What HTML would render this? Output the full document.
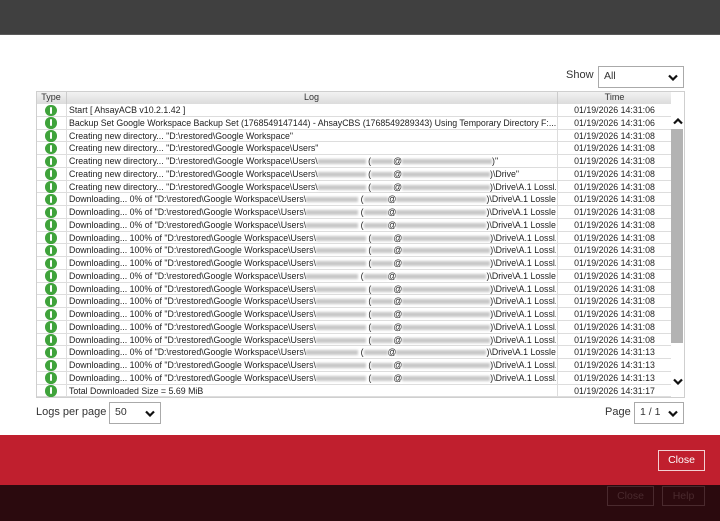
<!DOCTYPE html>
<html><head><meta charset="utf-8">
<style>
*{margin:0;padding:0;box-sizing:border-box}
body{width:720px;height:521px;overflow:hidden;background:#fff;font-family:"Liberation Sans",sans-serif;position:relative;color:#333}
.top{position:absolute;left:0;top:0;width:720px;height:35px;background:#404040;border-bottom:1px solid #5a5a5a}
.red{position:absolute;left:0;top:435px;width:720px;height:50px;background:#c01f2e}
.dark{position:absolute;left:0;top:485px;width:720px;height:36px;background:#2b0a0e}
.lbl{position:absolute;font-size:11px;color:#333}
.sel{position:absolute;border:1px solid #aaa;background:#fff;font-size:10.5px;padding:3px 5px;color:#333}
.sel svg{position:absolute;right:5px;top:50%;margin-top:-3px}
.tbl{position:absolute;left:36px;top:91px;width:649px;height:307px;border:1px solid #cfcfcf;overflow:hidden}
.hdr{position:absolute;left:0;top:0;width:634px;height:12px;background:linear-gradient(#f2f2f2,#dcdcdc);font-size:9px;color:#333}
.hdr div{position:absolute;top:0;text-align:center;height:12px}
.row{position:absolute;left:0;width:634px;height:12.75px;border-bottom:1px solid #ddd;font-size:8.8px;white-space:nowrap;line-height:12px;color:#222}
.row .ic{position:absolute;left:8px;top:0.5px;width:11.5px;height:11.5px;border-radius:50%;background:#3fa33b}
.row .ic:after{content:"";position:absolute;left:4.6px;top:2.2px;width:2.2px;height:7px;background:#fff;border-radius:1px}
.row .lg{position:absolute;left:29px;width:490px;overflow:hidden;border-left:1px solid #ddd;padding-left:2px;height:12.75px}
.row .tm{position:absolute;left:520px;width:114px;text-align:center;border-left:1px solid #ddd;height:12.75px}
.b{display:inline-block;height:5px;background:#c8c8c8;filter:blur(1px);vertical-align:middle}
.sb{position:absolute;left:634px;top:37px;width:12px;height:214px;background:#b3b3b3}
.btn{position:absolute;font-size:10.5px;text-align:center;line-height:18px}
</style></head><body>
<div class="top"></div>
<div class="lbl" style="left:566px;top:69px">Show</div>
<div class="sel" style="left:598px;top:66px;width:86px;height:22px">All<svg width="10" height="7" viewBox="0 0 10 7"><path d="M1 1.5L5 5.5L9 1.5" stroke="#111" stroke-width="2.2" fill="none"/></svg></div>

<div class="tbl">
<div class="hdr"><div style="left:0;width:28px">Type</div><div style="left:29px;width:490px;border-left:1px solid #ccc">Log</div><div style="left:520px;width:114px;border-left:1px solid #ccc">Time</div></div>
<div class="sb"></div>
<svg style="position:absolute;left:636px;top:26px" width="10" height="7" viewBox="0 0 10 7"><path d="M1 5.5L5 1.5L9 5.5" stroke="#111" stroke-width="2.2" fill="none"/></svg>
<svg style="position:absolute;left:636px;top:286px" width="10" height="7" viewBox="0 0 10 7"><path d="M1 1.5L5 5.5L9 1.5" stroke="#111" stroke-width="2.2" fill="none"/></svg>

<div class="row" style="top:12px"><i class="ic"></i><div class="lg">Start [ AhsayACB v10.2.1.42 ]</div><div class="tm">01/19/2026 14:31:06</div></div>
<div class="row" style="top:24.75px"><i class="ic"></i><div class="lg">Backup Set Google Workspace Backup Set (1768549147144) - AhsayCBS (1768549289343) Using Temporary Directory F:...</div><div class="tm">01/19/2026 14:31:06</div></div>
<div class="row" style="top:37.5px"><i class="ic"></i><div class="lg">Creating new directory... "D:\restored\Google Workspace"</div><div class="tm">01/19/2026 14:31:08</div></div>
<div class="row" style="top:50.25px"><i class="ic"></i><div class="lg">Creating new directory... "D:\restored\Google Workspace\Users"</div><div class="tm">01/19/2026 14:31:08</div></div>
<div class="row" style="top:63px"><i class="ic"></i><div class="lg">Creating new directory... "D:\restored\Google Workspace\Users\<span class="b" style="width:48px"></span> (<span class="b" style="width:22px"></span>@<span class="b" style="width:90px"></span>)"</div><div class="tm">01/19/2026 14:31:08</div></div>
<div class="row" style="top:75.75px"><i class="ic"></i><div class="lg">Creating new directory... "D:\restored\Google Workspace\Users\<span class="b" style="width:48px"></span> (<span class="b" style="width:22px"></span>@<span class="b" style="width:88px"></span>)\Drive"</div><div class="tm">01/19/2026 14:31:08</div></div>
<div class="row" style="top:88.5px"><i class="ic"></i><div class="lg">Creating new directory... "D:\restored\Google Workspace\Users\<span class="b" style="width:48px"></span> (<span class="b" style="width:22px"></span>@<span class="b" style="width:88px"></span>)\Drive\A.1 Lossl...</div><div class="tm">01/19/2026 14:31:08</div></div>
<div class="row" style="top:101.25px"><i class="ic"></i><div class="lg">Downloading... 0% of "D:\restored\Google Workspace\Users\<span class="b" style="width:52px"></span> (<span class="b" style="width:24px"></span>@<span class="b" style="width:90px"></span>)\Drive\A.1 Lossles...</div><div class="tm">01/19/2026 14:31:08</div></div>
<div class="row" style="top:114px"><i class="ic"></i><div class="lg">Downloading... 0% of "D:\restored\Google Workspace\Users\<span class="b" style="width:52px"></span> (<span class="b" style="width:24px"></span>@<span class="b" style="width:90px"></span>)\Drive\A.1 Lossles...</div><div class="tm">01/19/2026 14:31:08</div></div>
<div class="row" style="top:126.75px"><i class="ic"></i><div class="lg">Downloading... 0% of "D:\restored\Google Workspace\Users\<span class="b" style="width:52px"></span> (<span class="b" style="width:24px"></span>@<span class="b" style="width:90px"></span>)\Drive\A.1 Lossles...</div><div class="tm">01/19/2026 14:31:08</div></div>
<div class="row" style="top:139.5px"><i class="ic"></i><div class="lg">Downloading... 100% of "D:\restored\Google Workspace\Users\<span class="b" style="width:50px"></span> (<span class="b" style="width:22px"></span>@<span class="b" style="width:88px"></span>)\Drive\A.1 Lossl...</div><div class="tm">01/19/2026 14:31:08</div></div>
<div class="row" style="top:152.25px"><i class="ic"></i><div class="lg">Downloading... 100% of "D:\restored\Google Workspace\Users\<span class="b" style="width:50px"></span> (<span class="b" style="width:22px"></span>@<span class="b" style="width:88px"></span>)\Drive\A.1 Lossl...</div><div class="tm">01/19/2026 14:31:08</div></div>
<div class="row" style="top:165px"><i class="ic"></i><div class="lg">Downloading... 100% of "D:\restored\Google Workspace\Users\<span class="b" style="width:50px"></span> (<span class="b" style="width:22px"></span>@<span class="b" style="width:88px"></span>)\Drive\A.1 Lossl...</div><div class="tm">01/19/2026 14:31:08</div></div>
<div class="row" style="top:177.75px"><i class="ic"></i><div class="lg">Downloading... 0% of "D:\restored\Google Workspace\Users\<span class="b" style="width:52px"></span> (<span class="b" style="width:24px"></span>@<span class="b" style="width:90px"></span>)\Drive\A.1 Lossles...</div><div class="tm">01/19/2026 14:31:08</div></div>
<div class="row" style="top:190.5px"><i class="ic"></i><div class="lg">Downloading... 100% of "D:\restored\Google Workspace\Users\<span class="b" style="width:50px"></span> (<span class="b" style="width:22px"></span>@<span class="b" style="width:88px"></span>)\Drive\A.1 Lossl...</div><div class="tm">01/19/2026 14:31:08</div></div>
<div class="row" style="top:203.25px"><i class="ic"></i><div class="lg">Downloading... 100% of "D:\restored\Google Workspace\Users\<span class="b" style="width:50px"></span> (<span class="b" style="width:22px"></span>@<span class="b" style="width:88px"></span>)\Drive\A.1 Lossl...</div><div class="tm">01/19/2026 14:31:08</div></div>
<div class="row" style="top:216px"><i class="ic"></i><div class="lg">Downloading... 100% of "D:\restored\Google Workspace\Users\<span class="b" style="width:50px"></span> (<span class="b" style="width:22px"></span>@<span class="b" style="width:88px"></span>)\Drive\A.1 Lossl...</div><div class="tm">01/19/2026 14:31:08</div></div>
<div class="row" style="top:228.75px"><i class="ic"></i><div class="lg">Downloading... 100% of "D:\restored\Google Workspace\Users\<span class="b" style="width:50px"></span> (<span class="b" style="width:22px"></span>@<span class="b" style="width:88px"></span>)\Drive\A.1 Lossl...</div><div class="tm">01/19/2026 14:31:08</div></div>
<div class="row" style="top:241.5px"><i class="ic"></i><div class="lg">Downloading... 100% of "D:\restored\Google Workspace\Users\<span class="b" style="width:50px"></span> (<span class="b" style="width:22px"></span>@<span class="b" style="width:88px"></span>)\Drive\A.1 Lossl...</div><div class="tm">01/19/2026 14:31:08</div></div>
<div class="row" style="top:254.25px"><i class="ic"></i><div class="lg">Downloading... 0% of "D:\restored\Google Workspace\Users\<span class="b" style="width:52px"></span> (<span class="b" style="width:24px"></span>@<span class="b" style="width:90px"></span>)\Drive\A.1 Lossles...</div><div class="tm">01/19/2026 14:31:13</div></div>
<div class="row" style="top:267px"><i class="ic"></i><div class="lg">Downloading... 100% of "D:\restored\Google Workspace\Users\<span class="b" style="width:50px"></span> (<span class="b" style="width:22px"></span>@<span class="b" style="width:88px"></span>)\Drive\A.1 Lossl...</div><div class="tm">01/19/2026 14:31:13</div></div>
<div class="row" style="top:279.75px"><i class="ic"></i><div class="lg">Downloading... 100% of "D:\restored\Google Workspace\Users\<span class="b" style="width:50px"></span> (<span class="b" style="width:22px"></span>@<span class="b" style="width:88px"></span>)\Drive\A.1 Lossl...</div><div class="tm">01/19/2026 14:31:13</div></div>
<div class="row" style="top:292.5px"><i class="ic"></i><div class="lg">Total Downloaded Size = 5.69 MiB</div><div class="tm">01/19/2026 14:31:17</div></div>
</div>

<div class="lbl" style="left:36px;top:406px">Logs per page</div>
<div class="sel" style="left:109px;top:402px;width:52px;height:22px">50<svg width="10" height="7" viewBox="0 0 10 7"><path d="M1 1.5L5 5.5L9 1.5" stroke="#111" stroke-width="2.2" fill="none"/></svg></div>
<div class="lbl" style="left:605px;top:406px">Page</div>
<div class="sel" style="left:634px;top:402px;width:50px;height:22px">1 / 1<svg width="10" height="7" viewBox="0 0 10 7"><path d="M1 1.5L5 5.5L9 1.5" stroke="#111" stroke-width="2.2" fill="none"/></svg></div>

<div class="red"></div>
<div class="btn" style="left:658px;top:450px;width:47px;height:21px;border:1.5px solid #f2d0d3;color:#fff;line-height:18px">Close</div>
<div class="dark"></div>
<div class="btn" style="left:607px;top:486px;width:47px;height:20px;border:1px solid #4a2a2e;color:#4a2a2e">Close</div>
<div class="btn" style="left:662px;top:486px;width:43px;height:20px;border:1px solid #4a2a2e;color:#4a2a2e">Help</div>
</body></html>
